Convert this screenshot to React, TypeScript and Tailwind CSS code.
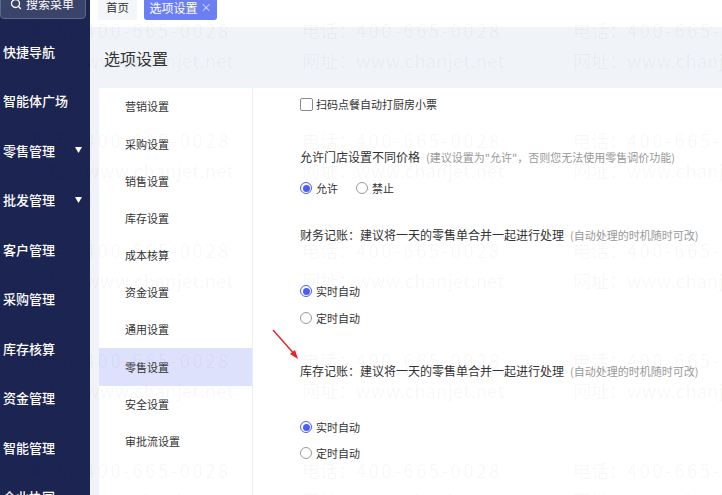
import {Search} from 'lucide-react'

const navItems = [
    {label: '快捷导航'},
    {label: '智能体广场'},
    {label: '零售管理', caret: true},
    {label: '批发管理', caret: true},
    {label: '客户管理'},
    {label: '采购管理'},
    {label: '库存核算'},
    {label: '资金管理'},
    {label: '智能管理'},
    {label: '企业协同'},
]

const menuItems = ['营销设置', '采购设置', '销售设置', '库存设置', '成本核算', '资金设置', '通用设置', '零售设置', '安全设置', '审批流设置']

function Caret() {
    return (
        <svg width="7" height="6" viewBox="0 0 7 6" className="ml-auto mr-[8px]">
            <polygon points="0,0 7,0 3.5,6" fill="#fff"/>
        </svg>
    )
}

function Radio({checked, label}: {checked?: boolean; label: string}) {
    return (
        <label className="flex items-center gap-[4px]">
            <span
                className={`flex h-[12px] w-[12px] items-center justify-center rounded-full border ${checked ? 'border-[#4a5ef2]' : 'border-[#9a9a9a]'}`}>
                {checked && <span className="h-[7px] w-[7px] rounded-full bg-[#4a5ef2]"/>}
            </span>
            <span className="text-[11px] text-[#333]">{label}</span>
        </label>
    )
}

function Watermark() {
    const cells = Array.from({length: 15})
    return (
        <div className="pointer-events-none absolute top-[15px] left-[-59px] grid w-[813px] grid-cols-3 text-[18px] text-black/[0.04]">
            {cells.map((_, i) => (
                <div key={i} className="h-[110px] leading-[30px] whitespace-nowrap">
                    <div>电话：<span className="tracking-[2.8px]">400-665-0028</span></div>
                    <div>网址：<span className="tracking-[0.4px]">www.chanjet.net</span></div>
                </div>
            ))}
        </div>
    )
}

export default function App() {
    return (
        <div className="flex h-[495px] w-[722px] overflow-hidden font-['Noto_Sans_CJK_SC','Noto_Sans',sans-serif]">
            <aside className="flex w-[90px] shrink-0 flex-col bg-[#1c2452] text-white">
                <div
                    className="-mt-[11px] flex h-[30px] w-[86px] shrink-0 items-center gap-[4px] rounded-[4px] border border-[#5d668b] bg-[#3a4369] pl-[9px] text-[12px]">
                    <Search size={12} strokeWidth={2.6}/>
                    <span>搜索菜单</span>
                </div>
                <nav className="mt-[7.5px] flex flex-col">
                    {navItems.map(item => (
                        <div key={item.label} className="flex h-[49.5px] shrink-0 items-center pl-[3px] text-[13px] font-medium">
                            {item.label}
                            {item.caret && <Caret/>}
                        </div>
                    ))}
                </nav>
            </aside>

            <main className="relative flex flex-1 flex-col bg-[#f0f3f7]">
                <div className="flex h-[27px] shrink-0 items-start gap-[7px] overflow-hidden bg-white pl-[8px]">
                    <div className="-mt-[5px] flex h-[25px] w-[39px] items-center justify-center bg-[#f4f6f9] text-[11.5px] text-[#333]">
                        首页
                    </div>
                    <div
                        className="-mt-[5px] flex h-[25px] w-[73px] items-center justify-center gap-[3px] rounded-b-[3px] bg-[#6b7ef3] text-[12px] text-white">
                        选项设置<span className="text-[11px] font-light">×</span>
                    </div>
                </div>

                <div className="flex h-[61px] shrink-0 items-center pl-[14px] text-[16px] text-[#333]">选项设置</div>

                <div className="ml-[9px] flex flex-1 bg-white">
                    <ul className="w-[154px] shrink-0 border-r border-[#eceef2]">
                        {menuItems.map(name => (
                            <li key={name}
                                className={`flex h-[37.2px] items-center pl-[26px] text-[11px] text-[#333] ${name === '零售设置' ? 'bg-[#dee1fb]' : ''}`}>
                                {name}
                            </li>
                        ))}
                    </ul>

                    <div className="flex flex-1 flex-col pt-[8px] pl-[47px]">
                        <label className="flex h-[16px] items-center gap-[3px]">
                            <span className="h-[13px] w-[13px] rounded-[2px] border border-[#8a8a8a]"/>
                            <span className="text-[11px] text-[#333]">扫码点餐自动打厨房小票</span>
                        </label>

                        <div className="mt-[35px] flex h-[20px] items-center whitespace-nowrap">
                            <span className="text-[12px] text-[#333]">允许门店设置不同价格</span>
                            <span className="ml-[6px] text-[11px] text-[#999]">(建议设置为"允许"，否则您无法使用零售调价功能)</span>
                        </div>
                        <div className="mt-[13px] flex h-[16px] items-center gap-[18px]">
                            <Radio checked label="允许"/>
                            <Radio label="禁止"/>
                        </div>

                        <div className="mt-[29px] flex h-[20px] items-center whitespace-nowrap">
                            <span className="text-[12px] text-[#333]">财务记账：建议将一天的零售单合并一起进行处理</span>
                            <span className="ml-[6px] text-[11px] text-[#999]">(自动处理的时机随时可改)</span>
                        </div>
                        <div className="mt-[38px] flex h-[16px] items-center">
                            <Radio checked label="实时自动"/>
                        </div>
                        <div className="mt-[11px] flex h-[16px] items-center">
                            <Radio label="定时自动"/>
                        </div>

                        <div className="mt-[35px] flex h-[20px] items-center whitespace-nowrap">
                            <span className="text-[12px] text-[#333]">库存记账：建议将一天的零售单合并一起进行处理</span>
                            <span className="ml-[6px] text-[11px] text-[#999]">(自动处理的时机随时可改)</span>
                        </div>
                        <div className="mt-[38px] flex h-[16px] items-center">
                            <Radio checked label="实时自动"/>
                        </div>
                        <div className="mt-[10px] flex h-[16px] items-center">
                            <Radio label="定时自动"/>
                        </div>
                    </div>
                </div>

                <Watermark/>

                {/* red annotation arrow */}
                <svg className="pointer-events-none absolute top-[326px] left-[180px]" width="34" height="36" viewBox="0 0 34 36">
                    <line x1="3" y1="4" x2="26" y2="30" stroke="#e32424" strokeWidth="1.4"/>
                    <polygon points="28,33 20,28 25,24" fill="#e32424"/>
                </svg>
            </main>
        </div>
    )
}
